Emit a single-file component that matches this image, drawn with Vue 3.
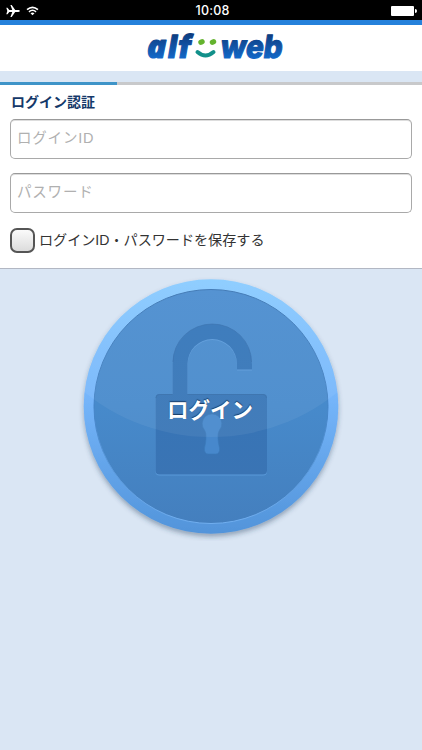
<script setup>
import { ref } from 'vue';

const loginId = ref('');
const password = ref('');
const remember = ref(false);
const progress = ref(27.8);
</script>

<template>
  <div class="screen">
    <div class="status-bar">
      <div class="status-left">
        <svg class="plane" width="14" height="14" viewBox="0 0 14 14">
          <path d="M0.3 3.8h1.2l1.8 2.3h3L4.4 1h1.3l3.5 5.1h3.2c.8 0 1.4.4 1.4.9s-.6.9-1.4.9H9.2L5.7 13H4.4l1.9-5.1h-3l-1.8 2.3H.3L1.3 7z" fill="#fff" />
        </svg>
        <svg class="wifi" width="13" height="10" viewBox="0 0 14 11">
          <path d="M1 4.1Q7-1.2 13 4.1" fill="none" stroke="#fff" stroke-width="1.8" />
          <path d="M3.1 6.4Q7 3.1 10.9 6.4" fill="none" stroke="#fff" stroke-width="1.7" />
          <path d="M4.8 8Q7 6.2 9.2 8L7 10.2z" fill="#fff" />
        </svg>
      </div>
      <span class="time">10:08</span>
      <div class="battery"></div>
    </div>

    <header class="header">
      <svg class="logo" width="150" height="46" viewBox="0 0 150 46">
        <defs>
          <linearGradient id="logoBlue" gradientUnits="userSpaceOnUse" x1="0" y1="8" x2="0" y2="33">
            <stop offset="0" stop-color="#0c3c7e" />
            <stop offset="0.45" stop-color="#1150a0" />
            <stop offset="1" stop-color="#1268c8" />
          </linearGradient>
          <linearGradient id="logoBlueSkewed" gradientUnits="userSpaceOnUse" x1="0" y1="-24" x2="0" y2="1">
            <stop offset="0" stop-color="#0c3c7e" />
            <stop offset="0.45" stop-color="#1150a0" />
            <stop offset="1" stop-color="#1268c8" />
          </linearGradient>
        </defs>
        <text class="logo-a" x="2" y="32.5">a</text>
        <text class="logo-text" transform="translate(21.5 32.5) skewX(-10)">l<tspan x="10">f</tspan></text>
        <ellipse cx="56.5" cy="17" rx="3.3" ry="2.7" fill="#64b32e" transform="rotate(-20 56.5 17)" />
        <ellipse cx="68" cy="17" rx="3.3" ry="2.7" fill="#64b32e" transform="rotate(-20 68 17)" />
        <path d="M52.5 27Q60.5 34 68.5 27" fill="none" stroke="#12908a" stroke-width="4" stroke-linecap="round" />
        <text class="logo-text" transform="translate(74.5 32.5) skewX(-8)" textLength="62" lengthAdjust="spacingAndGlyphs">web</text>
      </svg>
    </header>

    <div class="progress">
      <div class="progress-value" :style="{ width: progress + '%' }"></div>
    </div>

    <form class="panel" @submit.prevent>
      <h1 class="title">ログイン認証</h1>
      <input v-model="loginId" class="field" type="text" placeholder="ログインID" />
      <input v-model="password" class="field" type="password" placeholder="パスワード" />
      <label class="remember">
        <input v-model="remember" class="checkbox" type="checkbox" />
        <span>ログインID・パスワードを保存する</span>
      </label>
    </form>

    <button class="login" type="button">
      <svg width="270" height="270" viewBox="76 271 270 270">
        <defs>
          <linearGradient id="rim" x1="0" y1="0" x2="0" y2="1">
            <stop offset="0" stop-color="#89cbff" />
            <stop offset="0.45" stop-color="#76b6fb" />
            <stop offset="1" stop-color="#5294da" />
          </linearGradient>
          <linearGradient id="disc" x1="0" y1="0" x2="0" y2="1">
            <stop offset="0" stop-color="#4b8dd0" />
            <stop offset="0.5" stop-color="#478acb" />
            <stop offset="1" stop-color="#447fbe" />
          </linearGradient>
          <linearGradient id="bevel" x1="0" y1="0" x2="0" y2="1">
            <stop offset="0" stop-color="#3974b2" />
            <stop offset="0.5" stop-color="#4382c5" />
            <stop offset="1" stop-color="#70aeef" />
          </linearGradient>
          <linearGradient id="lockFill" gradientUnits="userSpaceOnUse" x1="0" y1="324" x2="0" y2="475">
            <stop offset="0" stop-color="#3375b9" />
            <stop offset="1" stop-color="#3a74b4" />
          </linearGradient>
          <filter id="drop" x="-10%" y="-10%" width="120%" height="120%">
            <feDropShadow dx="0" dy="3" stdDeviation="2.5" flood-color="#273d5c" flood-opacity="0.4" />
          </filter>
          <clipPath id="round">
            <circle cx="211" cy="406.5" r="127.3" />
          </clipPath>
        </defs>
        <circle cx="211" cy="406.5" r="127.3" fill="url(#rim)" filter="url(#drop)" />
        <circle cx="211" cy="406.5" r="117" fill="url(#disc)" stroke="url(#bevel)" />

        <!-- open padlock: highlight one pixel below, then the recess -->
        <g fill="#5a9ada" transform="translate(0 1)">
          <path d="M172.5 394V364a39.75 40 0 0 1 79.5 0v5.5h-15V364a24.75 25 0 0 0-49.5 0v30z" />
          <rect x="155.5" y="394" width="111.5" height="80.5" rx="4" />
        </g>
        <g fill="url(#lockFill)">
          <path d="M172.5 395V364a39.75 40 0 0 1 79.5 0v5.5h-15V364a24.75 25 0 0 0-49.5 0v31z" />
          <rect x="155.5" y="394" width="111.5" height="80.5" rx="4" />
        </g>
        <path d="M173 362a39.25 38 0 0 1 78.5 0" fill="none" stroke="#3069a8" stroke-opacity="0.6" />
        <path d="M156 398q0-3.5 3.5-3.5h13M187.5 394.5h75.5q3.5 0 3.5 3.5" fill="none" stroke="#346eac" />
        <path d="M204.5 430A9.8 9.8 0 1 1 219.5 430Q217.5 433 218 439Q218.2 443 219.5 448Q220 454 215.5 454H208.5Q204 454 204.5 448Q205.8 443 206 439Q206.5 433 204.5 430z" fill="#4788cc" stroke="#3b7abb" stroke-width="0.6" />

        <circle cx="211" cy="236" r="201" fill="#fff" fill-opacity="0.06" clip-path="url(#round)" />
      </svg>
      <span class="login-label">ログイン</span>
    </button>
  </div>
</template>

<style>
body {
  margin: 0;
  background: #dae6f4;
}
</style>

<style scoped>
.screen {
  min-height: 750px;
  background: #dae6f4;
  font-family: "Liberation Sans", "Noto Sans CJK JP", sans-serif;
  overflow: hidden;
}

.status-bar {
  display: grid;
  grid-template-columns: 1fr auto 1fr;
  align-items: center;
  height: 20px;
  padding: 0 5px 0 6px;
  background: #000;
}

.status-left {
  display: flex;
  align-items: center;
  gap: 6px;
}

.time {
  color: #fff;
  font: 500 12.5px/20px Inter, sans-serif;
  letter-spacing: 0.2px;
  padding: 1px 0 0 2px;
}

.battery {
  justify-self: end;
  width: 23px;
  height: 10px;
  margin-right: 3px;
  border-radius: 1px;
  background: #fff;
  position: relative;
}

.battery::after {
  content: '';
  position: absolute;
  right: -3px;
  top: 3px;
  width: 2px;
  height: 4px;
  border-radius: 0 2px 2px 0;
  background: #fff;
}

.header {
  display: flex;
  justify-content: center;
  box-sizing: border-box;
  height: 51px;
  border-top: 5px solid #2581db;
  background: #fff;
}

.logo-text {
  font: 800 32px Inter, sans-serif;
  fill: url(#logoBlueSkewed);
  stroke: url(#logoBlueSkewed);
  stroke-width: 1.2;
  stroke-linejoin: round;
}

.logo-a {
  font: italic 800 32px "Open Sans", sans-serif;
  fill: url(#logoBlue);
  stroke: url(#logoBlue);
  stroke-width: 1.2;
  stroke-linejoin: round;
}

.logo {
  margin-left: 18px;
}

.progress {
  height: 3px;
  margin-top: 11px;
  background: #c8c9cb;
}

.progress-value {
  height: 100%;
  background: #3e94c8;
}

.panel {
  display: flex;
  flex-direction: column;
  box-sizing: border-box;
  height: 184px;
  padding: 7px 10px 0;
  border-bottom: 1px solid #b2b7c3;
  background: #fff;
}

.title {
  margin: 0 0 7px 1px;
  color: #143869;
  font-size: 14px;
  line-height: 20px;
  font-weight: 700;
}

.field {
  box-sizing: border-box;
  width: 402px;
  height: 40px;
  margin: 0 0 14px;
  padding: 0 6px 2px;
  border: 1px solid #a9a9a9;
  border-top-color: #999;
  border-radius: 5px;
  background: #fff;
  box-shadow: inset 0 1px 0 #ddd;
  font: 14.5px "Liberation Sans", "Noto Sans CJK JP", sans-serif;
  letter-spacing: 0.8px;
  outline: none;
}

.field::placeholder {
  color: #b0b0b0;
  opacity: 1;
}

.remember {
  display: flex;
  align-items: center;
  gap: 4px;
  color: #333;
  font-size: 14.1px;
  line-height: 25px;
}

.remember span {
  padding-top: 1px;
}

.checkbox {
  appearance: none;
  box-sizing: border-box;
  width: 25px;
  height: 25px;
  margin: 0;
  border: 2px solid #555;
  border-radius: 7px;
  background: linear-gradient(#fafafa, #dcdcdc);
}

.login {
  display: grid;
  place-items: center;
  width: 270px;
  height: 270px;
  margin: 2px 0 0 76px;
  padding: 0;
  border: 0;
  background: none;
}

.login svg,
.login-label {
  grid-area: 1 / 1;
}

.login-label {
  padding: 6px 2px 0 0;
  color: #fff;
  font: 700 21.5px/30px "Noto Sans CJK JP", sans-serif;
  text-shadow: 0 -1px 1px #173c68;
  z-index: 1;
}
</style>
